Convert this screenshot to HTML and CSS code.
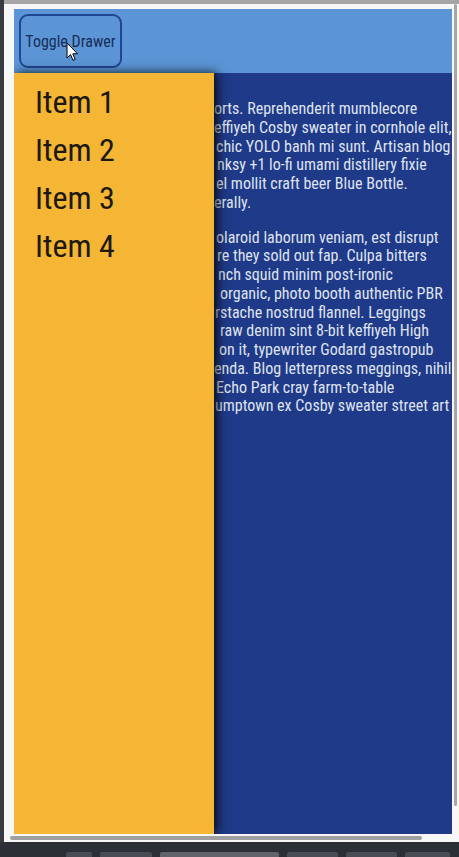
FILE: index.html
```html
<!DOCTYPE html>
<html lang="en">
<head>
<meta charset="utf-8">
<title>Drawer demo</title>
<link rel="stylesheet" href="styles.css">
</head>
<body>
<div class="window">
  <div class="titlebar"></div>
  <div class="frame">
    <div class="viewport">
      <header class="appbar">
        <button class="toggle" type="button">Toggle Drawer</button>
      </header>
      <main class="content">
        <p class="para">
          <span class="ln">orts. Reprehenderit mumblecore</span>
          <span class="ln">effiyeh Cosby sweater in cornhole elit,</span>
          <span class="ln in2">chic YOLO banh mi sunt. Artisan blog</span>
          <span class="ln in3">nksy +1 lo-fi umami distillery fixie</span>
          <span class="ln in2">el mollit craft beer Blue Bottle.</span>
          <span class="ln">erally.</span>
        </p>
        <p class="para">
          <span class="ln in2">olaroid laborum veniam, est disrupt</span>
          <span class="ln in3">re they sold out fap. Culpa bitters</span>
          <span class="ln in4">nch squid minim post-ironic</span>
          <span class="ln in6">organic, photo booth authentic PBR</span>
          <span class="ln in1">rstache nostrud flannel. Leggings</span>
          <span class="ln in6">raw denim sint 8-bit keffiyeh High</span>
          <span class="ln in5">on it, typewriter Godard gastropub</span>
          <span class="ln">enda. Blog letterpress meggings, nihil</span>
          <span class="ln in2">Echo Park cray farm-to-table</span>
          <span class="ln in1">umptown ex Cosby sweater street art</span>
        </p>
      </main>
      <nav class="drawer">
        <ul class="menu">
          <li>Item 1</li>
          <li>Item 2</li>
          <li>Item 3</li>
          <li>Item 4</li>
        </ul>
      </nav>
      <svg class="cursor" width="13" height="20" viewBox="0 0 13 20" aria-hidden="true">
        <path d="M1 1 L1 16 L4.6 12.6 L7 18.4 L9.2 17.5 L6.8 11.8 L11.6 11.8 Z" fill="#ffffff" stroke="#000000" stroke-width="1" stroke-linejoin="round"/>
      </svg>
    </div>
    <div class="vbar"></div>
    <div class="hbar"></div>
  </div>
</div>
<div class="taskbar">
  <span class="tb w26"></span>
  <span class="tb w52"></span>
  <span class="tb w119 lit"></span>
  <span class="tb w51"></span>
  <span class="tb w51"></span>
  <span class="tb w45"></span>
</div>
</body>
</html>
```

FILE: styles.css
```css
html, body {
  margin: 0;
  padding: 0;
}

body {
  width: 459px;
  height: 857px;
  overflow: hidden;
  background: #393b43;
  font-family: "Roboto Condensed", "Roboto", "Liberation Sans", sans-serif;
  font-stretch: condensed;
}

.window {
  margin-left: 4px;
  width: 455px;
}

.titlebar {
  height: 4px;
  background: #a5a5a5;
}

.frame {
  position: relative;
  height: 838px;
  box-sizing: border-box;
  padding: 5px 7px 8px 10px;
  background: #f7f7f7;
}

.viewport {
  position: relative;
  height: 825px;
  overflow: hidden;
  display: grid;
  grid-template-rows: 64px 1fr;
  background: #1f3a88;
}

.appbar {
  background: #5b95d5;
  padding: 5px;
  display: flex;
  align-items: flex-start;
}

.toggle {
  width: 103px;
  height: 54px;
  box-sizing: border-box;
  border: 2px solid #1f4696;
  border-radius: 9px;
  background: transparent;
  color: #182d58;
  font-family: inherit;
  font-stretch: condensed;
  font-size: 16px;
  padding: 0;
  white-space: nowrap;
}

.content {
  padding: 11px 0 0 200px;
  color: #dfe3ef;
  font-size: 16px;
  line-height: 18.75px;
}

.para {
  margin: 16px 0;
}

.ln {
  display: block;
  white-space: nowrap;
}

.in1 { padding-left: 1px; }
.in2 { padding-left: 2px; }
.in3 { padding-left: 3px; }
.in4 { padding-left: 4px; }
.in5 { padding-left: 5px; }
.in6 { padding-left: 6px; }

.drawer {
  position: absolute;
  left: 0;
  top: 64px;
  bottom: 0;
  width: 200px;
  background: #f5b535;
  box-shadow: 3px 0 10px rgba(0, 0, 0, 0.85);
}

.menu {
  list-style: none;
  margin: 0;
  padding: 5px 0 0 21px;
  color: #1c1912;
  font-size: 32px;
  line-height: 48px;
}

.cursor {
  position: absolute;
  left: 52px;
  top: 33px;
}

.vbar {
  position: absolute;
  right: 2px;
  top: 0;
  width: 3px;
  height: 802px;
  border-radius: 2px;
  background: #a6a6a6;
}

.hbar {
  position: absolute;
  left: 6px;
  bottom: 2px;
  width: 412px;
  height: 4px;
  border-radius: 2px;
  background: #a0a0a0;
}

.taskbar {
  height: 15px;
  box-sizing: border-box;
  padding-left: 66px;
  display: flex;
  align-items: flex-end;
  gap: 8px;
  background: #2d2f37;
}

.tb {
  height: 5px;
  border-radius: 2px 2px 0 0;
  background: #4a4c55;
}

.tb.lit { background: #62646c; }
.w26 { width: 26px; }
.w52 { width: 52px; }
.w119 { width: 119px; }
.w51 { width: 51px; }
.w45 { width: 45px; }
```
